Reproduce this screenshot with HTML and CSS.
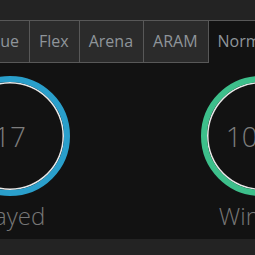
FILE: index.html
```html
<!DOCTYPE html>
<html>
<head>
<meta charset="utf-8">
<link rel="stylesheet" href="styles.css">
</head>
<body>
<div class="header"></div>
<div class="tabs">
  <div class="tab">Queue</div>
  <div class="tab">Flex</div>
  <div class="tab">Arena</div>
  <div class="tab">ARAM</div>
  <div class="tab active">Normal</div>
</div>
<div class="stats">
  <div class="stat">
    <div class="ring blue"><span class="num">17</span></div>
    <div class="label">Played</div>
  </div>
  <div class="stat">
    <div class="ring green"><span class="num">100%</span></div>
    <div class="label">Winrate</div>
  </div>
</div>
<div class="footer"></div>
</body>
</html>
```
FILE: styles.css
```css
html, body {
  margin: 0;
  padding: 0;
  background: #121212;
  font-family: "Open Sans", "DejaVu Sans", sans-serif;
  overflow: hidden;
  width: 255px;
  height: 255px;
}
.header {
  height: 20px;
  background: #232323;
}
.tabs {
  display: flex;
  margin-left: -40px;
  border-top: 1px solid #585858;
  background: #232323;
  white-space: nowrap;
}
.tab {
  flex: none;
  height: 41px;
  line-height: 41px;
  padding: 0 10px 0 9px;
  font-size: 16px;
  color: #8f959a;
  background: #2b2b2b;
  border-right: 1px solid #585858;
  border-bottom: 1px solid #585858;
}
.tab.active {
  background: #121212;
  border-bottom-color: #121212;
  border-right: none;
}
.stats {
  display: flex;
  gap: 131px;
  margin-left: -50px;
  padding-top: 13px;
  height: 163px;
}
.stat {
  flex: none;
  width: 120px;
  display: flex;
  flex-direction: column;
  align-items: center;
}
.ring {
  box-sizing: border-box;
  width: 120px;
  height: 120px;
  border-radius: 50%;
  border: 6px solid #2a9fcb;
  box-shadow: inset 0 0 0 1.5px #e8e8e8;
  display: flex;
  align-items: center;
  justify-content: center;
}
.ring.green {
  border-color: #3dbf8b;
}
.num {
  font-size: 28px;
  font-weight: 300;
  color: #7d7d7d;
  line-height: 1;
}
.label {
  margin-top: 4px;
  font-size: 24px;
  line-height: 32px;
  font-weight: 300;
  color: #777;
  white-space: nowrap;
}
.footer {
  height: 20px;
  background: #232323;
}
```
